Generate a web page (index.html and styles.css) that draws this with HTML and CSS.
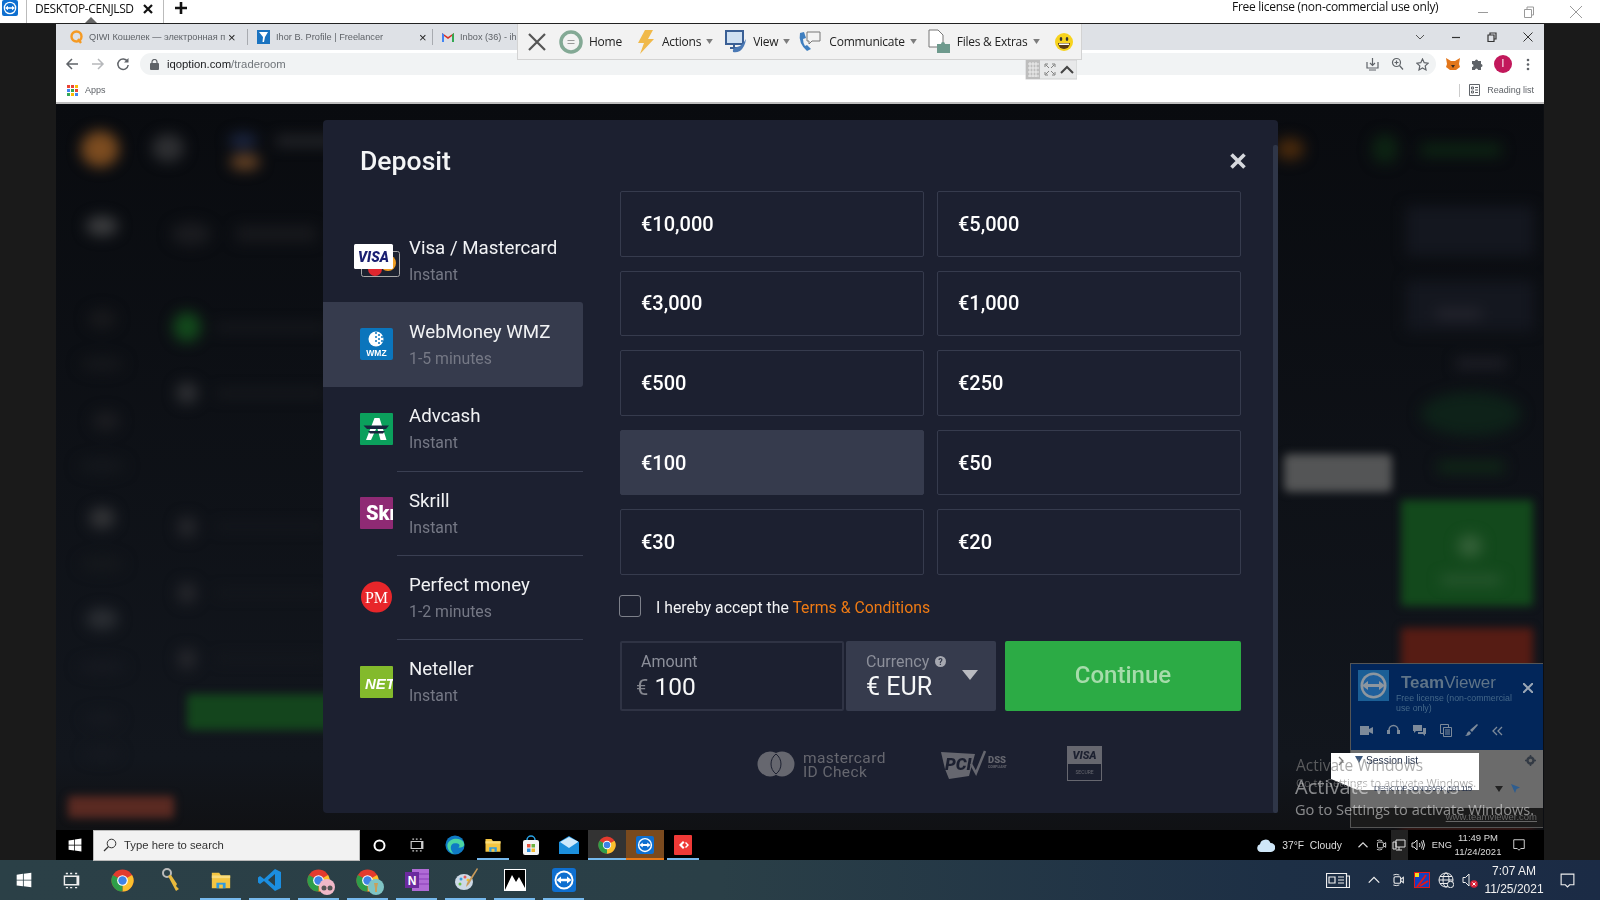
FILE: index.html
```html
<!DOCTYPE html>
<html lang="en">
<head>
<meta charset="utf-8">
<title>Deposit</title>
<link rel="stylesheet" href="styles.css">
</head>
<body>
<svg class="defs" width="0" height="0">
  <defs>
    <symbol id="chrome" viewBox="0 0 24 24">
      <circle cx="12" cy="12" r="11.5" fill="#e33b2e"/>
      <path d="M12 12 L22 6.2 A11.5 11.5 0 0 1 12 23.5Z" fill="#fbc02d"/>
      <path d="M12 12 L12 23.5 A11.5 11.5 0 0 1 2 6.2Z" fill="#2e9e49"/>
      <circle cx="12" cy="12" r="5.6" fill="#fff"/>
      <circle cx="12" cy="12" r="4.4" fill="#3f83e6"/>
    </symbol>
    <symbol id="tv" viewBox="0 0 24 24">
      <rect x="0" y="0" width="24" height="24" rx="3" fill="#0e6fd0"/>
      <circle cx="12" cy="12" r="9.5" fill="#fff"/>
      <circle cx="12" cy="12" r="7.6" fill="#0e6fd0"/>
      <path d="M4.5 12 L9 8.6 V10.8 H15 V8.6 L19.5 12 L15 15.4 V13.2 H9 V15.4Z" fill="#fff"/>
    </symbol>
    <symbol id="folder" viewBox="0 0 24 24">
      <path d="M2 4h8l2 3h10v14H2Z" fill="#f4c542"/>
      <path d="M2 7h20v3H2Z" fill="#f9dc7c"/>
      <path d="M7 15h10v6H7Z" fill="#2f9be0"/>
      <path d="M10 17h4v4h-4Z" fill="#f4c542"/>
    </symbol>
    <symbol id="meet" viewBox="0 0 24 24">
      <rect x="6" y="7" width="10" height="10" rx="2" fill="none" stroke="currentColor" stroke-width="1.6"/>
      <path d="M16 11l4-3v8l-4-3" fill="none" stroke="currentColor" stroke-width="1.6"/>
      <path d="M5 4.5q4-2 9 0M5 19.5q4 2 9 0" fill="none" stroke="currentColor" stroke-width="1.4"/>
    </symbol>
    <symbol id="caretup" viewBox="0 0 16 16">
      <path d="M2 11l6-6 6 6" fill="none" stroke="currentColor" stroke-width="1.5"/>
    </symbol>
    <symbol id="bubble" viewBox="0 0 24 24">
      <path d="M3 3h18v15h-6l-3 3-3-3H3Z" fill="none" stroke="currentColor" stroke-width="1.6"/>
    </symbol>
    <symbol id="winlogo" viewBox="0 0 24 24">
      <path d="M1 4.2l9.4-1.4v8.8H1ZM11.6 2.6L23 1v10.6H11.6ZM1 12.8h9.4v8.7L1 20.2ZM11.6 12.8H23V23l-11.4-1.6Z" fill="#fff"/>
    </symbol>
    <symbol id="taskview" viewBox="0 0 24 24">
      <path d="M4 2h3M10 2h3M17 2h3M4 22h3M10 22h3M17 22h3M2 6h20v12H2ZM20 6v12" fill="none" stroke="currentColor" stroke-width="2"/>
    </symbol>
    <symbol id="caret" viewBox="0 0 8 6"><path d="M0 0h8L4 6Z" fill="#7c7c7c"/></symbol>
  </defs>
</svg>

<header class="tvbar">
  <svg class="tvbar-logo" width="16" height="16"><use href="#tv"/></svg>
  <div class="tvbar-tab">
    <span class="tvbar-name">DESKTOP-CENJLSD</span>
    <svg class="tvbar-x" width="10" height="10" viewBox="0 0 10 10"><path d="M1 1l8 8M9 1l-8 8" stroke="#111" stroke-width="2.2"/></svg>
    <i class="tvbar-notch"></i>
  </div>
  <svg class="tvbar-plus" width="12" height="12" viewBox="0 0 12 12"><path d="M6 0v12M0 6h12" stroke="#111" stroke-width="2.6"/></svg>
  <span class="tvbar-license">Free license (non-commercial use only)</span>
  <div class="winctl">
    <svg width="12" height="12" viewBox="0 0 12 12"><path d="M1 6.5h10" stroke="#9a9a9a"/></svg>
    <svg width="12" height="12" viewBox="0 0 12 12"><path d="M1.5 3.5h7v8h-7ZM4 3.5V1h6.500v8H8.500" fill="none" stroke="#9a9a9a"/></svg>
    <svg width="14" height="14" viewBox="0 0 14 14"><path d="M1 1l12 12M13 1L1 13" stroke="#9a9a9a"/></svg>
  </div>
</header>

<div class="stage">
  <div class="strip"></div>
  <div class="remote">
    <div class="chrome">
      <div class="tabs">
        <div class="tab tab-a">
          <svg class="favicon" width="13" height="14" viewBox="0 0 13 14"><circle cx="6.500" cy="6.500" r="5" fill="none" stroke="#f59a23" stroke-width="2.400"/><path d="M8 9l3 4" stroke="#f59a23" stroke-width="2.400"/></svg>
          <span class="tab-title">QIWI Кошелек — электронная п</span>
          <span class="tab-x">×</span>
        </div>
        <div class="tab tab-b">
          <svg class="favicon" width="13" height="14" viewBox="0 0 13 14"><rect width="13" height="14" fill="#1a73c0"/><path d="M2 2h9L8 7 7 12H5.500L6 7Z" fill="#fff"/></svg>
          <span class="tab-title">Ihor B. Profile | Freelancer</span>
          <span class="tab-x">×</span>
        </div>
        <div class="tab tab-c">
          <svg class="favicon" width="12" height="10" viewBox="0 0 12 10"><path d="M0 1l6 4 6-4v9h-2V4L6 7 2 4v6H0Z" fill="#d93025"/><path d="M0 10V1l2 1.500V10Z" fill="#4285f4"/><path d="M12 10V1l-2 1.500V10Z" fill="#34a853"/></svg>
          <span class="tab-title">Inbox (36) - ihorb</span>
        </div>
        <div class="tabs-right">
          <svg width="10" height="10" viewBox="0 0 10 10"><path d="M1 3l4 4 4-4" fill="none" stroke="#555" stroke-width="1"/></svg>
          <svg width="10" height="10" viewBox="0 0 10 10"><path d="M1 5.500h8" stroke="#333" stroke-width="1.200"/></svg>
          <svg width="10" height="10" viewBox="0 0 10 10"><path d="M1 3h6v6.500H1ZM3 3V1h6v6H7" fill="none" stroke="#333" stroke-width="1.200"/></svg>
          <svg width="10" height="10" viewBox="0 0 10 10"><path d="M.5.500l9 9M9.500.500l-9 9" stroke="#333" stroke-width="1"/></svg>
        </div>
      </div>
      <div class="toolbar">
        <svg class="nav" width="14" height="14" viewBox="0 0 14 14"><path d="M13 7H2M7 2L2 7l5 5" fill="none" stroke="#5f6368" stroke-width="1.500"/></svg>
        <svg class="nav" width="14" height="14" viewBox="0 0 14 14"><path d="M1 7h11M7 2l5 5-5 5" fill="none" stroke="#b6b8bb" stroke-width="1.500"/></svg>
        <svg class="nav" width="14" height="14" viewBox="0 0 14 14"><path d="M11.500 4.500A5.200 5.200 0 1 0 12.200 8" fill="none" stroke="#5f6368" stroke-width="1.500"/><path d="M12.500 1v4.500H8Z" fill="#5f6368"/></svg>
        <div class="omnibox">
          <svg width="9" height="11" viewBox="0 0 9 11"><rect y="4" width="9" height="7" rx="1" fill="#5f6368"/><path d="M2 4.500V3a2.500 2.500 0 0 1 5 0v1.500" fill="none" stroke="#5f6368" stroke-width="1.200"/></svg>
          <span class="url"><b>iqoption.com</b>/traderoom</span>
          <div class="omni-actions">
            <svg width="13" height="14" viewBox="0 0 13 14"><path d="M6.500 1v7M4 6l2.500 2.500L9 6M1 5v6h11V5" fill="none" stroke="#5f6368" stroke-width="1.200"/><path d="M3 13h7" stroke="#5f6368"/></svg>
            <svg width="13" height="14" viewBox="0 0 13 14"><circle cx="5.500" cy="5.500" r="4" fill="none" stroke="#5f6368" stroke-width="1.200"/><path d="M8.500 8.500L12 12.500M5.500 3.500v4M3.500 5.500h4" stroke="#5f6368" stroke-width="1.200"/></svg>
            <svg width="13" height="13" viewBox="0 0 13 13"><path d="M6.500 1l1.700 3.700 4 .5-3 2.700.8 4-3.500-2-3.500 2 .8-4-3-2.700 4-.5Z" fill="none" stroke="#5f6368" stroke-width="1.200"/></svg>
          </div>
        </div>
        <div class="exts">
          <svg width="14" height="14" viewBox="0 0 14 14"><path d="M0 1l5 3h4l5-3-1 6 1 3-4 3H4L0 10l1-3Z" fill="#e2761b"/><path d="M5 8h4l-2 3Z" fill="#3a2c20"/></svg>
          <svg width="13" height="13" viewBox="0 0 13 13"><path d="M1 3h3a1.500 1.500 0 0 1 3 0h3v3a1.500 1.500 0 0 1 0 3v3H7a1.500 1.500 0 0 0-3 0H1V9a1.500 1.500 0 0 0 0-3Z" fill="#5f6368"/></svg>
          <span class="avatar">I</span>
          <svg width="4" height="13" viewBox="0 0 4 13"><circle cx="2" cy="2" r="1.300" fill="#5f6368"/><circle cx="2" cy="6.500" r="1.300" fill="#5f6368"/><circle cx="2" cy="11" r="1.300" fill="#5f6368"/></svg>
        </div>
      </div>
      <div class="bookmarks">
        <svg width="11" height="11" viewBox="0 0 11 11"><g>
          <rect width="3" height="3" fill="#ea4335"/><rect x="4" width="3" height="3" fill="#ea4335"/><rect x="8" width="3" height="3" fill="#fbbc04"/>
          <rect y="4" width="3" height="3" fill="#4285f4"/><rect x="4" y="4" width="3" height="3" fill="#34a853"/><rect x="8" y="4" width="3" height="3" fill="#ea4335"/>
          <rect y="8" width="3" height="3" fill="#34a853"/><rect x="4" y="8" width="3" height="3" fill="#fbbc04"/><rect x="8" y="8" width="3" height="3" fill="#4285f4"/></g></svg>
        <span class="apps">Apps</span>
        <div class="reading">
          <i class="reading-sep"></i>
          <svg width="11" height="12" viewBox="0 0 11 12"><path d="M.5.500h10v11H.5ZM2.500 3h2v2h-2ZM2.500 7h2v2h-2ZM6 3.500h3M6 6h3M6 8.500h3" fill="none" stroke="#5f6368"/></svg>
          <span>Reading list</span>
        </div>
      </div>
    </div>

    <main class="page">
      <svg class="blurred" viewBox="0 0 1487 727" width="1487" height="727" aria-hidden="true">
        <defs>
          <filter id="b" x="-80%" y="-80%" width="260%" height="260%" color-interpolation-filters="sRGB"><feGaussianBlur stdDeviation="7"/></filter>
          <filter id="b2" x="-50%" y="-50%" width="200%" height="200%" color-interpolation-filters="sRGB"><feGaussianBlur stdDeviation="4.500"/></filter>
          <linearGradient id="bg" x1="0" y1="0" x2="0" y2="1"><stop offset="0" stop-color="#090b0f"/><stop offset=".9" stop-color="#12161d"/><stop offset="1" stop-color="#101114"/></linearGradient>
        </defs>
        <rect width="1487" height="727" fill="url(#bg)"/>
        <g filter="url(#b)">
          <ellipse cx="44" cy="45" rx="19" ry="18" fill="#7c4c20"/>
          <ellipse cx="112" cy="44" rx="16" ry="14" fill="#2e2f32"/>
          <ellipse cx="187" cy="37" rx="14" ry="8" fill="#1b2540"/>
          <ellipse cx="189" cy="58" rx="15" ry="8" fill="#6a4526"/>
          <rect x="220" y="32" width="60" height="10" fill="#26272b"/>
          <ellipse cx="46" cy="122" rx="16" ry="10" fill="#3c3d3f"/>
          <ellipse cx="135" cy="130" rx="20" ry="12" fill="#1a1b1f"/>
          <rect x="180" y="122" width="80" height="16" fill="#18191d"/>
          <ellipse cx="131" cy="223" rx="14" ry="15" fill="#134a1c"/>
          <ellipse cx="131" cy="289" rx="11" ry="11" fill="#2e2f33"/>
          <rect x="160" y="220" width="110" height="7" fill="#191b1f"/>
          <rect x="160" y="286" width="110" height="7" fill="#191b1f"/>
          <ellipse cx="131" cy="423" rx="10" ry="11" fill="#25262b"/>
          <ellipse cx="131" cy="489" rx="10" ry="11" fill="#25262b"/>
          <ellipse cx="131" cy="555" rx="10" ry="11" fill="#25262b"/>
          <rect x="160" y="420" width="110" height="5" fill="#171a1f"/>
          <rect x="160" y="486" width="110" height="5" fill="#171a1f"/>
          <rect x="160" y="552" width="110" height="5" fill="#171a1f"/>
          <ellipse cx="46" cy="215" rx="14" ry="10" fill="#18191c"/>
          <ellipse cx="46" cy="260" rx="22" ry="8" fill="#15171b"/>
          <ellipse cx="50" cy="317" rx="14" ry="10" fill="#1b1c20"/>
          <ellipse cx="46" cy="362" rx="24" ry="8" fill="#14171c"/>
          <ellipse cx="46" cy="414" rx="13" ry="11" fill="#323336"/>
          <ellipse cx="46" cy="460" rx="22" ry="8" fill="#15181c"/>
          <ellipse cx="46" cy="515" rx="16" ry="11" fill="#2a2d32"/>
          <ellipse cx="46" cy="563" rx="24" ry="7" fill="#161920"/>
          <ellipse cx="46" cy="615" rx="18" ry="7" fill="#161920"/>
          <ellipse cx="46" cy="650" rx="18" ry="6" fill="#161920"/>
          <ellipse cx="1234" cy="45" rx="14" ry="11" fill="#4a2a0c"/>
          <ellipse cx="1329" cy="45" rx="13" ry="15" fill="#0d2413"/>
          <rect x="1365" y="40" width="80" height="12" fill="#0d2613"/>
          <rect x="1350" y="102" width="128" height="50" fill="#14171f"/>
          <rect x="1350" y="177" width="128" height="50" fill="#14171f"/>
          <rect x="1380" y="205" width="45" height="10" fill="#25252e"/>
          <rect x="1400" y="255" width="50" height="9" fill="#22222a"/>
          <ellipse cx="1415" cy="310" rx="50" ry="22" fill="#0e2219"/>
          <rect x="1382" y="358" width="66" height="10" fill="#102b17"/>
        </g>
        <g filter="url(#b2)">
          <rect x="131" y="590" width="150" height="36" rx="4" fill="#14451d"/>
          <rect x="12" y="692" width="106" height="22" rx="3" fill="#5a2a22"/>
          <rect x="1228" y="350" width="108" height="38" rx="5" fill="#545556"/>
          <rect x="1345" y="396" width="132" height="106" rx="2" fill="#13491c"/>
          <rect x="1345" y="524" width="132" height="200" rx="2" fill="#561c14"/>
        </g>
        <g filter="url(#b)">
          <ellipse cx="1414" cy="442" rx="12" ry="11" fill="#356139"/>
          <rect x="1385" y="472" width="60" height="8" fill="#2c5a33"/>
        </g>
      </svg>

      <section class="modal">
        <div class="modal-left">
          <h1 class="modal-title">Deposit</h1>
          <ul class="methods">
            <li class="method">
              <svg class="m-icon m-visa" width="46" height="34" viewBox="0 0 46 34">
                <rect x="7.500" y="8.500" width="38" height="25" rx="2" fill="#1d2230" stroke="#a8a8a8"/>
                <circle cx="34" cy="20" r="8" fill="#f2a024"/>
                <circle cx="21" cy="26" r="7" fill="#e0262e"/>
                <rect x="0" y="1" width="39" height="25" rx="1.500" fill="#fff"/>
                <text x="19.500" y="18.500" class="visa-txt" text-anchor="middle">VISA</text>
              </svg>
              <div><div class="m-name">Visa / Mastercard</div><div class="m-sub">Instant</div></div>
            </li>
            <li class="method is-active">
              <svg class="m-icon" width="33" height="32" viewBox="0 0 33 32">
                <rect width="33" height="32" rx="2" fill="#0b75bc"/>
                <circle cx="16" cy="11" r="7.500" fill="#fff"/>
                <g fill="#0b75bc"><circle cx="19" cy="7" r="1"/><circle cx="22" cy="9" r="1"/><circle cx="19" cy="11" r="1"/><circle cx="22" cy="13" r="1"/><circle cx="19" cy="15" r="1"/><circle cx="16" cy="5" r="1"/><circle cx="16" cy="9" r="1"/><circle cx="16" cy="13" r="1"/></g>
                <text x="16.500" y="28" class="wmz-txt" text-anchor="middle">WMZ</text>
              </svg>
              <div><div class="m-name">WebMoney WMZ</div><div class="m-sub">1-5 minutes</div></div>
            </li>
            <li class="method">
              <svg class="m-icon" width="33" height="32" viewBox="0 0 33 32">
                <rect width="33" height="32" rx="1" fill="#0ba05c"/>
                <path d="M14.500 5h5l7 22h-6l-3.500-13L11 27H6Z" fill="#fff"/>
                <path d="M3.500 12.500H29l-3 3.500H7ZM8 18h17l-2 2.500H10Z" fill="#18263f"/>
              </svg>
              <div><div class="m-name">Advcash</div><div class="m-sub">Instant</div></div>
            </li>
            <li class="method has-rule">
              <svg class="m-icon" width="33" height="32" viewBox="0 0 33 32">
                <rect width="33" height="32" rx="1" fill="#8f2a74"/>
                <text x="6" y="23" class="sk-txt">Skr</text>
              </svg>
              <div><div class="m-name">Skrill</div><div class="m-sub">Instant</div></div>
            </li>
            <li class="method has-rule">
              <svg class="m-icon" width="33" height="32" viewBox="0 0 33 32">
                <circle cx="16.500" cy="16" r="15.500" fill="#e8262a"/>
                <text x="16.500" y="21.500" class="pm-txt" text-anchor="middle">PM</text>
              </svg>
              <div><div class="m-name">Perfect money</div><div class="m-sub">1-2 minutes</div></div>
            </li>
            <li class="method has-rule">
              <svg class="m-icon" width="33" height="32" viewBox="0 0 33 32">
                <rect width="33" height="32" rx="1" fill="#83ba2c"/>
                <text x="5" y="22.500" class="net-txt">NET</text>
              </svg>
              <div><div class="m-name">Neteller</div><div class="m-sub">Instant</div></div>
            </li>
          </ul>
        </div>

        <div class="modal-right">
          <div class="amounts">
            <button class="amount">€10,000</button>
            <button class="amount">€5,000</button>
            <button class="amount">€3,000</button>
            <button class="amount">€1,000</button>
            <button class="amount">€500</button>
            <button class="amount">€250</button>
            <button class="amount is-selected">€100</button>
            <button class="amount">€50</button>
            <button class="amount">€30</button>
            <button class="amount">€20</button>
          </div>
          <div class="accept">
            <i class="checkbox"></i>
            <span class="accept-text">I hereby accept the <a class="terms">Terms &amp; Conditions</a></span>
          </div>
          <div class="form-row">
            <div class="field field-amount">
              <div class="f-label">Amount</div>
              <div class="f-value"><span class="f-euro">€</span> 100</div>
            </div>
            <div class="field field-currency">
              <div class="f-label">Currency
                <svg width="11" height="11" viewBox="0 0 11 11"><circle cx="5.500" cy="5.500" r="5.500" fill="#a6a8b0"/><text x="5.500" y="8.500" class="help-txt" text-anchor="middle">?</text></svg>
              </div>
              <div class="f-value">€ EUR</div>
              <i class="f-tri"></i>
            </div>
            <button class="continue">Continue</button>
          </div>
          <div class="secure">
            <div class="sec-mc">
              <svg width="38" height="26" viewBox="0 0 38 26"><circle cx="13" cy="13" r="12.500" fill="#66676f"/><circle cx="25" cy="13" r="12.500" fill="#66676f"/><path d="M19 3a12.500 12.500 0 0 1 0 20 12.500 12.500 0 0 1 0-20Z" fill="#66676f" stroke="#1c2030"/></svg>
              <div class="sec-mc-text"><div>mastercard</div><div>ID Check</div></div>
            </div>
            <div class="sec-pci">
              <svg width="70" height="30" viewBox="0 0 70 30">
                <path d="M0 3l34 2-6 22-20 3-4-10Z" fill="#66676f"/>
                <text x="4" y="21" class="pci-txt">PCI</text>
                <path d="M30 15l5 9 9-22" fill="none" stroke="#66676f" stroke-width="2.500"/>
                <text x="47" y="14" class="dss-txt">DSS</text>
                <text x="47" y="19" class="cmp-txt">COMPLIANT</text>
              </svg>
            </div>
            <div class="sec-visa"><div class="sv-top">VISA</div><div class="sv-bot">SECURE</div></div>
          </div>
        </div>

        <svg class="modal-close" width="16" height="16" viewBox="0 0 16 16"><path d="M1.500 1.500l13 13M14.500 1.500l-13 13" stroke="#d6d8dd" stroke-width="3.600"/></svg>
        <i class="modal-scroll"></i>
      </section>
    </main>

    <div class="inner-task">
      <div class="it-start"><svg width="14" height="14"><use href="#winlogo"/></svg></div>
      <div class="it-search">
        <svg width="14" height="14" viewBox="0 0 14 14"><circle cx="8.500" cy="5.500" r="4.300" fill="none" stroke="#333" stroke-width="1"/><path d="M5.500 8.500L1 13" stroke="#333" stroke-width="1.200"/></svg>
        <span>Type here to search</span>
      </div>
      <div class="it-cell"><svg width="13" height="13" viewBox="0 0 13 13"><circle cx="6.500" cy="6.500" r="5" fill="none" stroke="#fff" stroke-width="2"/></svg></div>
      <div class="it-cell tv-light"><svg width="14" height="14"><use href="#taskview"/></svg></div>
      <div class="it-cell"><svg width="20" height="20" viewBox="0 0 24 24"><circle cx="12" cy="12" r="11.500" fill="#0f7ac4"/><path d="M3 11c2-7 14-9 19-3 3 5-1 8-6 7 3-2 1-6-4-5-6 0-7 8-1 13-5-2-9-6-8-12Z" fill="#4bd6a2"/></svg></div>
      <div class="it-cell has-line-short"><svg width="18" height="18"><use href="#folder"/></svg></div>
      <div class="it-cell"><svg width="18" height="20" viewBox="0 0 18 20"><path d="M5 5a4 4 0 0 1 8 0" fill="none" stroke="#2aa5e8" stroke-width="1.500"/><rect x="1" y="5" width="16" height="15" rx="2" fill="#f4f4f4"/><rect x="5" y="9" width="3.500" height="3.500" fill="#e8503a"/><rect x="9.500" y="9" width="3.500" height="3.500" fill="#6db33f"/><rect x="5" y="13.500" width="3.500" height="3.500" fill="#2a8fe0"/><rect x="9.500" y="13.500" width="3.500" height="3.500" fill="#f5b82e"/></svg></div>
      <div class="it-cell"><svg width="20" height="18" viewBox="0 0 20 18"><path d="M0 6l10-6 10 6v12H0Z" fill="#1c8fdc"/><path d="M1 6l9 6 9-6v-.500L10 1Z" fill="#cfeafb"/></svg></div>
      <div class="it-cell is-chrome"><svg width="18" height="18"><use href="#chrome"/></svg></div>
      <div class="it-cell is-tv"><svg width="18" height="18"><use href="#tv"/></svg></div>
      <div class="it-cell has-line-short"><svg width="18" height="20" viewBox="0 0 18 20"><rect width="18" height="20" rx="1" fill="#ef3a37"/><path d="M9 6l-4 4 4 4 1.500-1.500L8 10l2.500-2.500ZM12 7l3 3-3 3-1-1 2-2-2-2Z" fill="#fff"/></svg></div>
      <div class="it-tray">
        <svg width="18" height="13" viewBox="0 0 18 13"><path d="M4 13a4 4 0 0 1-1-7.800A5.500 5.500 0 0 1 13.500 4 4.500 4.500 0 0 1 14 13Z" fill="#cfe6f7"/></svg>
        <span class="it-weather">37°F&nbsp; Cloudy</span>
        <svg class="t-up" width="12" height="12"><use href="#caretup"/></svg>
        <svg class="t-meet" width="14" height="14"><use href="#meet"/></svg>
        <span class="t-net"><svg width="14" height="12" viewBox="0 0 14 12"><path d="M4 1h9v7H4ZM1 3h3v7H1ZM7 8v3M4 11h6" fill="none" stroke="#ddd"/></svg></span>
        <svg width="14" height="12" viewBox="0 0 14 12"><path d="M1 4h2l3-3v10L3 8H1ZM8.500 4q1 2 0 4M10.500 2.500q2 3.500 0 7M12 1q3 5 0 10" fill="none" stroke="#ddd"/></svg>
        <span class="t-eng">ENG</span>
        <span class="t-clock"><span>11:49 PM</span><span>11/24/2021</span></span>
        <svg class="t-bubble" width="14" height="14"><use href="#bubble"/></svg>
      </div>
    </div>
  </div>
  <div class="strip"></div>

  <svg class="tb-grip" width="52" height="20" viewBox="0 0 52 20">
    <rect x="1" y="0" width="51" height="19" fill="#e8e9ea" stroke="#cfd0d1"/>
    <rect x="1" y="0" width="14" height="19" fill="#bdbdbd"/>
    <path d="M3 4h11M3 8h11M3 12h11M3 16h11M5 2v15M8 2v15M11 2v15" stroke="#eee"/>
    <path d="M20 7V4h3M27 4h3v3M20 12v3h3M30 12v3h-3M21 5l3 3M29 5l-3 3M21 14l3-3M29 14l-3-3" fill="none" stroke="#666" stroke-width=".8"/>
    <path d="M36 13l6-6 6 6" fill="none" stroke="#444" stroke-width="2"/>
  </svg>

  <nav class="tb">
    <svg class="tb-close" width="18" height="18" viewBox="0 0 18 18"><path d="M1 1l16 16M17 1L1 17" stroke="#555" stroke-width="2.200"/></svg>
    <div class="tb-item tb-home">
      <svg width="24" height="24" viewBox="0 0 24 24"><circle cx="12" cy="12" r="10" fill="#f2f2f2" stroke="#83a995" stroke-width="3.500"/><path d="M8.500 10.500h7M8.500 13.500h7" stroke="#999"/></svg>
      <span>Home</span>
    </div>
    <div class="tb-item tb-actions">
      <svg width="18" height="24" viewBox="0 0 18 24"><path d="M8 0h8l-5 9h6L3 24l4-11H1Z" fill="#f0b94a"/></svg>
      <span>Actions</span>
      <svg class="tb-caret" width="7" height="5"><use href="#caret"/></svg>
    </div>
    <div class="tb-item tb-view">
      <svg width="22" height="24" viewBox="0 0 22 24"><rect x="1" y="1" width="17" height="13" fill="#cfe0f2" stroke="#3a5f95" stroke-width="2"/><path d="M9 15v3M5 18h8" stroke="#3a5f95" stroke-width="2"/><path d="M8 22q-1-4 4-5 5-1 9-8-1 8-6 12-4 2-7 1Z" fill="#4a79b5"/></svg>
      <span>View</span>
      <svg class="tb-caret" width="7" height="5"><use href="#caret"/></svg>
    </div>
    <div class="tb-item tb-comm">
      <svg width="24" height="24" viewBox="0 0 24 24"><path d="M2 3q-2 10 7 18l4-2-4-4-2 1q-2-3-2-7l3-1-2-6Z" fill="#3f7fc0"/><path d="M9 2h13v9h-8l-3 3v-3H9Z" fill="#f4f4f4" stroke="#777"/></svg>
      <span>Communicate</span>
      <svg class="tb-caret" width="7" height="5"><use href="#caret"/></svg>
    </div>
    <div class="tb-item tb-files">
      <svg width="24" height="26" viewBox="0 0 24 26"><path d="M1 1h9l5 5v12H1Z" fill="#fff" stroke="#777"/><path d="M9 15h4a2 2 0 0 1 4 0h5v9H9Z" fill="#6e9a8d"/></svg>
      <span>Files &amp; Extras</span>
      <svg class="tb-caret" width="7" height="5"><use href="#caret"/></svg>
    </div>
    <svg class="tb-smile" width="18" height="18" viewBox="0 0 18 18"><circle cx="9" cy="9" r="9" fill="#f7d31e"/><ellipse cx="6" cy="6" rx="1.300" ry="2" fill="#333"/><ellipse cx="12" cy="6" rx="1.300" ry="2" fill="#333"/><path d="M3 10h12a6 6 0 0 1-12 0Z" fill="#5a3a14"/><path d="M4 10.500h10v1.500H4Z" fill="#fff"/></svg>
  </nav>

  <aside class="tvpanel">
    <div class="tvp-head">
      <div class="tvp-brand">
        <svg width="31" height="31" viewBox="0 0 31 31"><rect width="31" height="31" fill="#1b5f96"/><circle cx="15.500" cy="15.500" r="13" fill="#8d969f"/><circle cx="15.500" cy="15.500" r="10.500" fill="#1f5f9c"/><path d="M4 15.500L10 11v3h11v-3l6 4.500-6 4.500v-3H10v3Z" fill="#8d969f"/></svg>
        <div class="tvp-titles">
          <div class="tvp-name"><b>Team</b>Viewer</div>
          <div class="tvp-lic">Free license (non-commercial<br>use only)</div>
        </div>
        <svg class="tvp-x" width="10" height="10" viewBox="0 0 10 10"><path d="M0 0l10 10M10 0L0 10" stroke="#9aa6b5" stroke-width="2"/></svg>
      </div>
      <div class="tvp-tools">
        <svg width="13" height="9" viewBox="0 0 13 9"><rect width="9" height="9" fill="#7d8a9a"/><path d="M9 3l4-2v7L9 6Z" fill="#7d8a9a"/></svg>
        <svg width="13" height="13" viewBox="0 0 13 13"><path d="M2 8V6a4.500 4.500 0 0 1 9 0v2" fill="none" stroke="#7d8a9a" stroke-width="1.500"/><rect x="0" y="6" width="3" height="4" fill="#7d8a9a"/><rect x="10" y="6" width="3" height="4" fill="#7d8a9a"/></svg>
        <svg width="13" height="12" viewBox="0 0 13 12"><path d="M0 0h9v6H3L1 8V6H0ZM10 3h3v6h-1v2l-2-2H5V7h5Z" fill="#7d8a9a"/></svg>
        <svg width="12" height="13" viewBox="0 0 12 13"><path d="M.5.500h8v3M3.500 3.500h8v9h-8ZM5 6h5M5 8h5M5 10h5M.5.500v9h3" fill="none" stroke="#7d8a9a"/></svg>
        <svg width="13" height="13" viewBox="0 0 13 13"><path d="M12 0l1 1-6 7-2-2Z M4 7l2 2q-1 3-6 3 2-1 2-3Z" fill="#7d8a9a"/></svg>
        <svg width="11" height="10" viewBox="0 0 11 10"><path d="M5 1L1 5l4 4M10 1L6 5l4 4" fill="none" stroke="#7d8a9a" stroke-width="1.300"/></svg>
      </div>
    </div>
    <div class="tvp-body">
      <div class="session">
        <svg width="6" height="10" viewBox="0 0 6 10"><path d="M1 1l4 4-4 4" fill="none" stroke="#777" stroke-width="1.300"/></svg>
        <svg width="8" height="7" viewBox="0 0 8 7"><path d="M0 0h8L4 7Z" fill="#39557a"/></svg>
        <span>Session list</span>
      </div>
      <svg class="tvp-gear" width="11" height="11" viewBox="0 0 11 11"><circle cx="5.500" cy="5.500" r="3" fill="none" stroke="#333a44" stroke-width="2.400"/><path d="M5.500 0v2M5.500 9v2M0 5.500h2M9 5.500h2" stroke="#333a44" stroke-width="1.500"/></svg>
      <div class="tvp-row">
        <span class="tvp-device">DESKTOP-3OND36RK (591 115</span>
        <svg width="8" height="6" viewBox="0 0 8 6"><path d="M0 0h8L4 6Z" fill="#222"/></svg>
        <svg class="tvp-cursor" width="11" height="11" viewBox="0 0 11 11"><path d="M1 1l9 3.500-3.500 1.500L5 10Z" fill="#2e5d8f"/></svg>
      </div>
    </div>
    <div class="tvp-foot"><span>www.teamviewer.com</span></div>
  </aside>

  <div class="activate act-a"><div class="act-big">Activate Windows</div><div class="act-small">Go to Settings to activate Windows.</div></div>
  <div class="activate act-b"><div class="act-big">Activate Windows</div><div class="act-small">Go to Settings to activate Windows.</div></div>
</div>

<footer class="outer-task">
  <div class="ot-start"><svg width="16" height="16"><use href="#winlogo"/></svg></div>
  <div class="ot-tv"><svg width="17" height="21"><use href="#taskview"/></svg></div>
  <div class="ot-apps">
    <div class="ot-cell"><svg width="23" height="23"><use href="#chrome"/></svg></div>
    <div class="ot-cell"><svg width="24" height="26" viewBox="0 0 24 26"><circle cx="7" cy="6" r="4" fill="none" stroke="#bbb" stroke-width="2"/><path d="M8 9l8 15 3-2-3-3 1-2-6-9Z" fill="#e8b93c"/></svg></div>
    <div class="ot-cell is-open"><svg width="22" height="22"><use href="#folder"/></svg></div>
    <div class="ot-cell is-open"><svg width="24" height="24" viewBox="0 0 24 24"><path d="M17 1l6 3v16l-6 3L6 13l-4 3-2-1.500V9.500L2 8l4 3Z" fill="#1b8ee0"/><path d="M17 6v12l-7-6Z" fill="#2a3f47"/></svg></div>
    <div class="ot-cell is-open ot-badge">
      <svg width="23" height="23"><use href="#chrome"/></svg>
      <svg class="ot-over" width="16" height="16" viewBox="0 0 16 16"><circle cx="8" cy="8" r="8" fill="#f0b8c8"/><circle cx="5" cy="9" r="2.500" fill="#555"/><circle cx="11" cy="9" r="2.500" fill="#555"/></svg>
    </div>
    <div class="ot-cell is-open ot-badge">
      <svg width="23" height="23"><use href="#chrome"/></svg>
      <svg class="ot-over" width="16" height="16" viewBox="0 0 16 16"><circle cx="8" cy="8" r="8" fill="#7fc4c4"/><path d="M6 4h4l-1 5v4H7V9Z" fill="#c9a05a"/></svg>
    </div>
    <div class="ot-cell is-open"><svg width="24" height="24" viewBox="0 0 24 24"><rect x="7" y="1" width="17" height="22" fill="#b06bd6"/><path d="M7 6h17M7 11h17M7 16h17" stroke="#8a3fb8"/><rect x="0" y="4" width="14" height="16" fill="#6c2a9e"/><text x="7" y="16.500" class="one-txt" text-anchor="middle">N</text></svg></div>
    <div class="ot-cell is-open"><svg width="24" height="24" viewBox="0 0 24 24"><ellipse cx="10" cy="14" rx="9" ry="8" fill="#cdd9e6"/><circle cx="7" cy="11" r="1.500" fill="#3a9de0"/><circle cx="11" cy="9" r="1.500" fill="#e85a5a"/><circle cx="6" cy="16" r="1.500" fill="#6cc24a"/><circle cx="14" cy="12" r="1.500" fill="#f2c230"/><path d="M23 0l1 1-9 15-3 3 1-4Z" fill="#c99a5a"/></svg></div>
    <div class="ot-cell is-open"><svg width="22" height="22" viewBox="0 0 22 22"><rect width="22" height="22" fill="#fff"/><rect x="1" y="1" width="20" height="20" fill="#000"/><path d="M1 21L8 6l4 7 3-5 6 11v2Z" fill="#fff"/></svg></div>
    <div class="ot-cell is-open"><svg width="24" height="24"><use href="#tv"/></svg></div>
  </div>
  <div class="ot-tray">
    <svg width="24" height="16" viewBox="0 0 24 16"><path d="M.5 1.500h20v14H.5ZM20.500 4h3v11.500h-3M3 5h6v6H3ZM12 5h6M12 8h6M12 11h6" fill="none" stroke="#eee" stroke-width="1.200"/></svg>
    <svg class="ot-up" width="14" height="14"><use href="#caretup"/></svg>
    <svg class="ot-meet" width="16" height="16"><use href="#meet"/></svg>
    <svg class="ot-red" width="16" height="16" viewBox="0 0 16 16"><rect x=".5" y=".5" width="15" height="15" fill="#1540c0" stroke="#e01818"/><rect x="1" y="1" width="4" height="4" fill="#f4e020"/><path d="M3 15L12 3M6 14l8-5" stroke="#e01818" stroke-width="2"/></svg>
    <svg class="ot-globe" width="16" height="16" viewBox="0 0 16 16"><circle cx="8" cy="8" r="7" fill="none" stroke="#eee"/><ellipse cx="8" cy="8" rx="3" ry="7" fill="none" stroke="#eee"/><path d="M1 8h14M2 4.500h12M2 11.500h12" stroke="#eee"/><circle cx="12.500" cy="12.500" r="3.200" fill="#1f3146" stroke="#eee"/></svg>
    <svg class="ot-sound" width="16" height="16" viewBox="0 0 16 16"><path d="M1 5.500h2.500L7 2v12l-3.500-3.500H1Z" fill="none" stroke="#eee"/><circle cx="12" cy="12" r="3.800" fill="#d9233a"/><path d="M10.500 10.500l3 3M13.500 10.500l-3 3" stroke="#fff"/></svg>
    <span class="ot-clock"><span>7:07 AM</span><span>11/25/2021</span></span>
    <svg class="ot-bubble" width="17" height="17"><use href="#bubble"/></svg>
  </div>
</footer>
</body>
</html>
```

FILE: styles.css
```css
* { box-sizing: border-box; }
html, body { margin: 0; padding: 0; }
body {
  width: 1600px;
  height: 900px;
  overflow: hidden;
  display: flex;
  flex-direction: column;
  background: #1a1a1a;
  font-family: "Roboto", "Liberation Sans", sans-serif;
}
.defs { position: absolute; }
svg { display: block; flex: none; }

/* TeamViewer tab strip */
.tvbar {
  height: 24px;
  flex: none;
  background: #fff;
  border-bottom: 1px solid #222;
  display: flex;
  align-items: flex-start;
  font-family: "Open Sans", "Liberation Sans", sans-serif;
  font-size: 12px;
  color: #111;
}
.tvbar-logo { margin: 0 0 0 2px; }
.tvbar-tab {
  position: relative;
  width: 138px;
  height: 23px;
  margin-left: 8px;
  padding-left: 8px;
  border-left: 1px solid #bbb;
  border-right: 1px solid #bbb;
  display: flex;
  align-items: center;
  gap: 9px;
}
.tvbar-name { letter-spacing: -.38px; white-space: nowrap; line-height: 16px; margin-top: -6px; }
.tvbar-x { margin-top: -6px; }
.tvbar-notch {
  position: absolute;
  left: 58px;
  bottom: 0;
  width: 0;
  height: 0;
  border: 6px solid transparent;
  border-top: 0;
  border-bottom-color: #666;
}
.tvbar-plus { margin: 2px 0 0 11px; }
.tvbar-license { margin: -1px 0 0 1045px; letter-spacing: -.28px; white-space: nowrap; line-height: 16px; }
.winctl { display: flex; align-items: center; gap: 34px; margin: 5px 0 0 39px; }

/* Stage */
.stage { flex: 1; min-height: 0; display: flex; position: relative; }
.strip { flex: none; width: 56px; background: #1a1a1a; }
.strip:last-of-type { width: 57px; }
.remote { flex: 1; min-width: 0; display: flex; flex-direction: column; }

/* Chrome */
.chrome { flex: none; font-family: "Liberation Sans", sans-serif; color: #3c4043; }
.tabs { height: 26px; background: #dee1e6; display: flex; align-items: center; }
.tab { display: flex; align-items: center; height: 16px; font-size: 9.200px; color: #5f6368; position: relative; }
.tab-a { width: 192px; padding-left: 14px; border-right: 1px solid #a8abb0; }
.tab-b { width: 185px; padding-left: 9px; border-right: 1px solid #a8abb0; }
.tab-c { width: 110px; padding-left: 9px; }
.tab-title { margin-left: 6px; white-space: nowrap; }
.tab-a .tab-title { width: 137px; overflow: hidden; }
.tab-b .tab-title { width: 141px; overflow: hidden; }
.tab-x { font-size: 13px; color: #222; margin-left: 2px; }
.tabs-right { margin-left: auto; margin-right: 11px; display: flex; gap: 26px; }
.toolbar { height: 28px; background: #fff; display: flex; align-items: center; }
.nav { margin-left: 9px; }
.nav + .nav { margin-left: 12px; }
.nav + .nav + .nav { margin-left: 11px; }
.omnibox {
  height: 22px;
  width: 1296px;
  margin-left: 10px;
  flex: none;
  border-radius: 11px;
  background: #f1f3f4;
  display: flex;
  align-items: center;
  padding-left: 10px;
  gap: 8px;
}
.url { font-size: 11.300px; color: #70757a; }
.url b { font-weight: 400; color: #202124; }
.omni-actions { margin-left: auto; margin-right: 7px; display: flex; gap: 12px; align-items: center; }
.exts { display: flex; align-items: center; gap: 11px; margin-left: 10px; }
.avatar {
  width: 18px; height: 18px; border-radius: 50%;
  background: #c2185b; color: #fff; font-size: 10px; line-height: 18px; text-align: center;
  margin: 0 3px 0 -1px;
}
.bookmarks {
  height: 26px;
  background: #fff;
  border-bottom: 2px solid #bdbdbd;
  display: flex;
  align-items: center;
  padding-left: 11px;
  font-size: 9px;
  color: #5f6368;
}
.apps { margin-left: 7px; }
.reading { margin-left: auto; margin-right: 10px; display: flex; align-items: center; gap: 7px; letter-spacing: -.03px; }
.reading-sep { width: 1px; height: 13px; background: #ccc; margin-right: 2px; }

/* Blurred page */
.page { flex: 1; min-height: 0; position: relative; overflow: hidden; background: #0c0e12; }
.blurred { position: absolute; left: 0; top: 0; }

/* Modal */
.modal {
  position: absolute;
  left: 267px;
  top: 16px;
  width: 955px;
  height: 693px;
  background: #1c2030;
  border-radius: 4px;
  display: flex;
  color: #fff;
}
.modal-left { width: 260px; flex: none; }
.modal-title {
  margin: 0;
  height: 98px;
  padding: 24px 0 0 37px;
  font-size: 26.600px;
  line-height: 34px;
  font-weight: 500;
  color: #f4f5f6;
}
.methods { list-style: none; margin: 0; padding: 0; }
.method {
  position: relative;
  height: 84.300px;
  display: flex;
  align-items: center;
  gap: 16px;
  padding-left: 37px;
}
.method.is-active { background: #363b4d; border-radius: 0 3px 3px 0; }
.method.has-rule::before {
  content: "";
  position: absolute;
  left: 74px;
  right: 0;
  top: 0;
  height: 1px;
  background: #3a3f52;
}
.m-visa { margin: 0 0 0 -6px; }
.m-visa + div { margin-left: -7px; }
.m-name { font-size: 18.700px; line-height: 24px; color: #f1f2f4; }
.m-sub { font-size: 15.800px; line-height: 20px; margin-top: 5px; color: #757885; }
.visa-txt { font: italic 900 14px "Roboto", sans-serif; fill: #1a1f71; }
.wmz-txt { font: 700 8.500px "Liberation Sans", sans-serif; fill: #fff; }
.sk-txt { font: 900 20px "Roboto", sans-serif; fill: #fff; }
.pm-txt { font: 400 16px "Liberation Serif", serif; fill: #fff; }
.net-txt { font: italic 900 15px "Liberation Sans", sans-serif; fill: #fff; }

.modal-right { margin-left: 37px; width: 621px; padding-top: 71px; }
.amounts {
  display: grid;
  grid-template-columns: 304px 304px;
  grid-auto-rows: 65.600px;
  column-gap: 13px;
  row-gap: 14px;
}
.amount {
  background: transparent;
  border: 1px solid #363b4d;
  border-radius: 2px;
  color: #fff;
  font: 500 20px "Roboto", sans-serif;
  text-align: left;
  padding: 0 0 0 20px;
}
.amount.is-selected { background: #363b4d; }
.accept {
  margin-top: 20px;
  margin-left: -1px;
  height: 22px;
  display: flex;
  align-items: center;
  gap: 15px;
  font-size: 15.800px;
  color: #f1f2f4;
}
.accept-text { padding-top: 3px; }
.checkbox { width: 22px; height: 22px; border: 1px solid #7d808a; border-radius: 3px; flex: none; }
.terms { color: #ee7a14; }
.form-row { display: flex; margin-top: 24.500px; height: 70px; width: 621px; }
.field { position: relative; border-radius: 2px; padding: 9px 0 0 20px; }
.field-amount { width: 224px; border: 2px solid #2f3344; padding-top: 8px; padding-left: 19px; }
.field-currency { width: 150px; margin-left: 2px; background: #363b4d; padding-left: 20px; padding-top: 10px; }
.f-label { font-size: 16px; line-height: 21px; color: #8c8f9a; display: flex; align-items: center; gap: 6px; }
.help-txt { font: 700 9px "Roboto", sans-serif; fill: #363b4d; }
.f-value { font-size: 25px; line-height: 30px; color: #f6f7f8; }
.field-amount .f-value { font-size: 24.500px; margin-left: -3px; }
.f-euro { color: #85878f; font-size: 22px; margin-left: -2px; }
.f-tri {
  position: absolute;
  right: 18px;
  top: 29px;
  width: 0;
  height: 0;
  border-style: solid;
  border-width: 10px 8.500px 0;
  border-color: #b9bac0 transparent transparent;
}
.continue {
  margin-left: 9px;
  width: 236px;
  border: 0;
  border-radius: 2px;
  background: #2cab45;
  color: #a6dcab;
  font: 500 24px "Roboto", sans-serif;
  padding: 0 0 2px;
}
.secure { display: flex; align-items: center; margin-top: 35px; margin-left: 137px; gap: 56px; color: #66676f; }
.sec-mc { display: flex; align-items: center; gap: 8px; width: 128px; }
.sec-mc-text { font-size: 15.500px; line-height: 14px; letter-spacing: .4px; padding-top: 2px; white-space: nowrap; }
.sec-pci { width: 70px; }
.pci-txt { font: italic 900 17px "Roboto", sans-serif; fill: #1c2030; }
.dss-txt { font: 900 9.500px "Roboto", sans-serif; fill: #66676f; }
.cmp-txt { font: 700 3.300px "Roboto", sans-serif; fill: #66676f; }
.sec-visa { width: 35px; height: 35px; border: 1px solid #66676f; text-align: center; }
.sv-top { height: 17px; background: #66676f; color: #1c2030; font: italic 900 11px/17px "Roboto", sans-serif; }
.sv-bot { font: 400 5px/17px "Roboto", sans-serif; color: #66676f; }
.modal-close { position: absolute; left: 907px; top: 33px; }
.modal-scroll { position: absolute; right: 0; top: 25px; bottom: 0; width: 5px; background: #2f3648; border-radius: 2px; }

/* Inner Windows taskbar */
.inner-task {
  flex: none;
  height: 30px;
  background: #000;
  display: flex;
  align-items: center;
  color: #ddd;
  font-family: "Liberation Sans", sans-serif;
  font-size: 10px;
}
.it-start { width: 37px; display: flex; justify-content: center; }
.it-search {
  width: 267px;
  height: 31px;
  background: #f2f2f2;
  border: 1px solid #bbb;
  display: flex;
  align-items: center;
  gap: 7px;
  padding-left: 9px;
  color: #333;
  font-size: 11.300px;
}
.it-cell {
  position: relative;
  width: 38px;
  height: 30px;
  display: flex;
  align-items: center;
  justify-content: center;
}
.tv-light { color: #ccc; }
.has-line-short::after {
  content: "";
  position: absolute;
  left: 3px;
  right: 3px;
  bottom: 0;
  height: 2px;
  background: #76b9ed;
}
.is-chrome { background: #333; }
.is-chrome::after { content: ""; position: absolute; left: 0; right: 0; bottom: 0; height: 2px; background: #76b9ed; }
.is-tv { background: #7a4a1e; }
.is-tv::after { content: ""; position: absolute; left: 0; right: 0; bottom: 0; height: 2px; background: #e87817; }
.it-tray { margin-left: auto; display: flex; align-items: center; height: 30px; }
.it-weather { margin-left: 7px; white-space: nowrap; font-size: 10.300px; }
.t-up { margin-left: 15px; color: #ddd; }
.t-meet { margin-left: 5px; color: #ddd; }
.t-net { margin-left: 3px; margin-right: 3px; width: 17px; height: 30px; background: #222; display: flex; align-items: center; justify-content: center; }
.t-eng { margin-left: 7px; font-size: 9.300px; }
.t-clock { width: 48px; margin-left: 2px; text-align: center; font-size: 9.500px; line-height: 14px; display: flex; flex-direction: column; }
.t-bubble { margin: 0 18px 0 10px; color: #ddd; }

/* Floating TeamViewer toolbar */
.tb {
  position: absolute;
  left: 517px;
  top: 0;
  width: 565px;
  height: 36px;
  background: #f2f2f2;
  border: 1px solid #d3d3d3;
  border-top: 0;
  display: flex;
  align-items: center;
  font: 12px "Open Sans", "Liberation Sans", sans-serif;
  letter-spacing: -.25px;
  color: #222;
  white-space: nowrap;
}
.tb-close { margin-left: 10px; }
.tb-item { display: flex; align-items: center; }
.tb-caret { margin-left: 5px; }
.tb-home { margin-left: 13px; }
.tb-home span { margin-left: 6px; }
.tb-actions { margin-left: 15px; }
.tb-actions span { margin-left: 7px; }
.tb-view { margin-left: 12px; }
.tb-view span { margin-left: 6px; }
.tb-comm { margin-left: 8px; }
.tb-comm span { margin-left: 7px; }
.tb-files { margin-left: 11px; }
.tb-files span { margin-left: 5px; }
.tb-smile { margin-left: 15px; }
.tb-grip { position: absolute; left: 1025px; top: 36px; }

/* TeamViewer panel */
.tvpanel {
  position: absolute;
  left: 1350px;
  top: 639px;
  width: 193px;
  height: 165px;
  border: 1px solid #555;
  border-right: 0;
  display: flex;
  flex-direction: column;
  font-family: "Liberation Sans", sans-serif;
}
.tvp-head { height: 86px; background: #02265a; padding: 6px 0 0 7px; }
.tvp-brand { display: flex; position: relative; }
.tvp-titles { margin-left: 7px; padding-top: 2px; }
.tvp-name { font-size: 17px; line-height: 21px; color: #5f7488; margin-left: 5px; }
.tvp-lic { font-size: 8.800px; line-height: 10px; color: #456889; }
.tvp-x { position: absolute; left: 165px; top: 13px; }
.tvp-tools { display: flex; align-items: center; gap: 13.500px; margin: 11px 0 0 2px; }
.tvp-body { height: 58px; background: #6b6b6b; position: relative; }
.tvp-gear { position: absolute; right: 7px; top: 5px; }
.tvp-row { position: absolute; left: 23px; top: 33px; display: flex; align-items: center; gap: 12px; font-size: 8px; letter-spacing: -.75px; color: #1d2a44; white-space: nowrap; }
.tvp-device { width: 109px; }
.tvp-cursor { margin-left: -5px; }
.tvp-foot { flex: 1; background: #1b1b1b; text-align: right; padding: 3px 6px 0 0; font-size: 9.500px; color: #666; }
.tvp-foot span { text-decoration: underline; }
.session {
  position: absolute;
  left: -20px;
  top: 3px;
  width: 148px;
  height: 37px;
  background: #fff;
  display: flex;
  align-items: flex-start;
  padding: 2px 0 0 7px;
  gap: 11px;
  font: 10.300px/12px "Liberation Sans", sans-serif;
  color: #1d2a44;
  clip-path: polygon(0 0, 100% 0, 100% 100%, 18% 100%, 0 70%);
}
.session span { margin-left: -8px; }
.session svg { margin-top: 1px; }

.activate { position: absolute; font-family: "Open Sans", "Liberation Sans", sans-serif; white-space: nowrap; }
.act-a { left: 1296px; top: 731px; color: #555; mix-blend-mode: exclusion; }
.act-a .act-big { font-size: 15.500px; line-height: 20px; }
.act-a .act-small { font-size: 11px; line-height: 16px; }
.act-b { left: 1295px; top: 749px; color: rgba(255,255,255,.5); }
.act-b .act-big { font-size: 20px; line-height: 27px; }
.act-b .act-small { font-size: 14.600px; line-height: 19px; }

/* Outer Windows taskbar */
.outer-task {
  flex: none;
  height: 40px;
  background: linear-gradient(90deg, #2b4047 0%, #2a3f47 45%, #1d2f45 80%, #1b2b45 100%);
  display: flex;
  align-items: center;
  color: #f1f1f1;
  font-family: "Liberation Sans", sans-serif;
}
.ot-start { width: 48px; display: flex; justify-content: center; }
.ot-tv { width: 47px; display: flex; justify-content: center; color: #eee; }
.ot-apps { display: flex; margin-left: 3px; height: 40px; }
.ot-cell { position: relative; width: 49px; height: 40px; display: flex; align-items: center; justify-content: center; }
.is-open::after {
  content: "";
  position: absolute;
  left: 4px;
  right: 4px;
  bottom: 0;
  height: 2px;
  background: #76b9ed;
}
.ot-over { position: absolute; left: 25px; top: 19px; }
.one-txt { font: 700 12px "Liberation Sans", sans-serif; fill: #fff; }
.ot-tray { margin-left: auto; display: flex; align-items: center; height: 40px; }
.ot-up { margin-left: 17px; color: #eee; }
.ot-meet { margin-left: 9px; color: #eee; }
.ot-red { margin-left: 8px; }
.ot-globe { margin-left: 8px; }
.ot-sound { margin-left: 8px; }
.ot-clock { display: flex; flex-direction: column; align-items: center; width: 60px; margin-left: 6px; font-size: 12px; line-height: 18px; }
.ot-bubble { margin: 0 24px 0 15px; color: #eee; }
```
